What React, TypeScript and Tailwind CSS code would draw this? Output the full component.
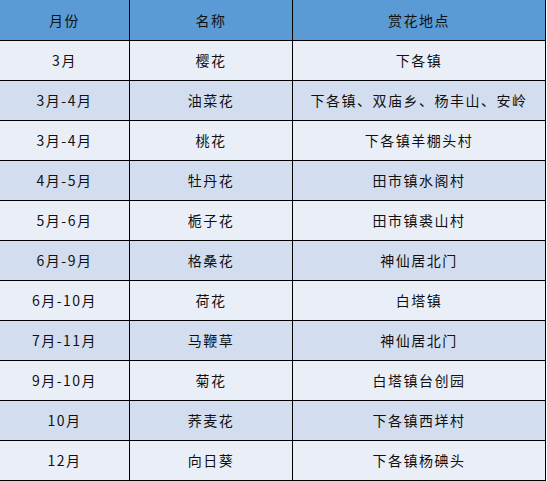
const rows: [string, string, string][] = [
  ['3月', '樱花', '下各镇'],
  ['3月-4月', '油菜花', '下各镇、双庙乡、杨丰山、安岭'],
  ['3月-4月', '桃花', '下各镇羊棚头村'],
  ['4月-5月', '牡丹花', '田市镇水阁村'],
  ['5月-6月', '栀子花', '田市镇裘山村'],
  ['6月-9月', '格桑花', '神仙居北门'],
  ['6月-10月', '荷花', '白塔镇'],
  ['7月-11月', '马鞭草', '神仙居北门'],
  ['9月-10月', '菊花', '白塔镇台创园'],
  ['10月', '荞麦花', '下各镇西垟村'],
  ['12月', '向日葵', '下各镇杨碘头'],
];

const cell = 'flex items-center justify-center border-r border-b border-black';

export default function App() {
  return (
    <div
      className="w-[547px] h-[481px] bg-white text-[14px] tracking-[1.5px] text-[#111]"
      style={{ fontFamily: '"Microsoft YaHei", "Noto Sans CJK SC", sans-serif' }}
    >
      <div className="grid w-[546px] grid-cols-[130px_163px_253px]">
        <div className={`${cell} h-[41px] bg-[#5b9bd5]`}>月份</div>
        <div className={`${cell} h-[41px] bg-[#5b9bd5]`}>名称</div>
        <div className={`${cell} h-[41px] bg-[#5b9bd5]`}>赏花地点</div>
        {rows.map((r, i) => {
          const bg = i % 2 === 0 ? 'bg-[#eaeff7]' : 'bg-[#d2deef]';
          return r.map((t, j) => (
            <div key={`${i}-${j}`} className={`${cell} h-[40px] ${bg} ${j === 2 ? 'whitespace-nowrap' : ''}`}>
              {t}
            </div>
          ));
        })}
      </div>
    </div>
  );
}
